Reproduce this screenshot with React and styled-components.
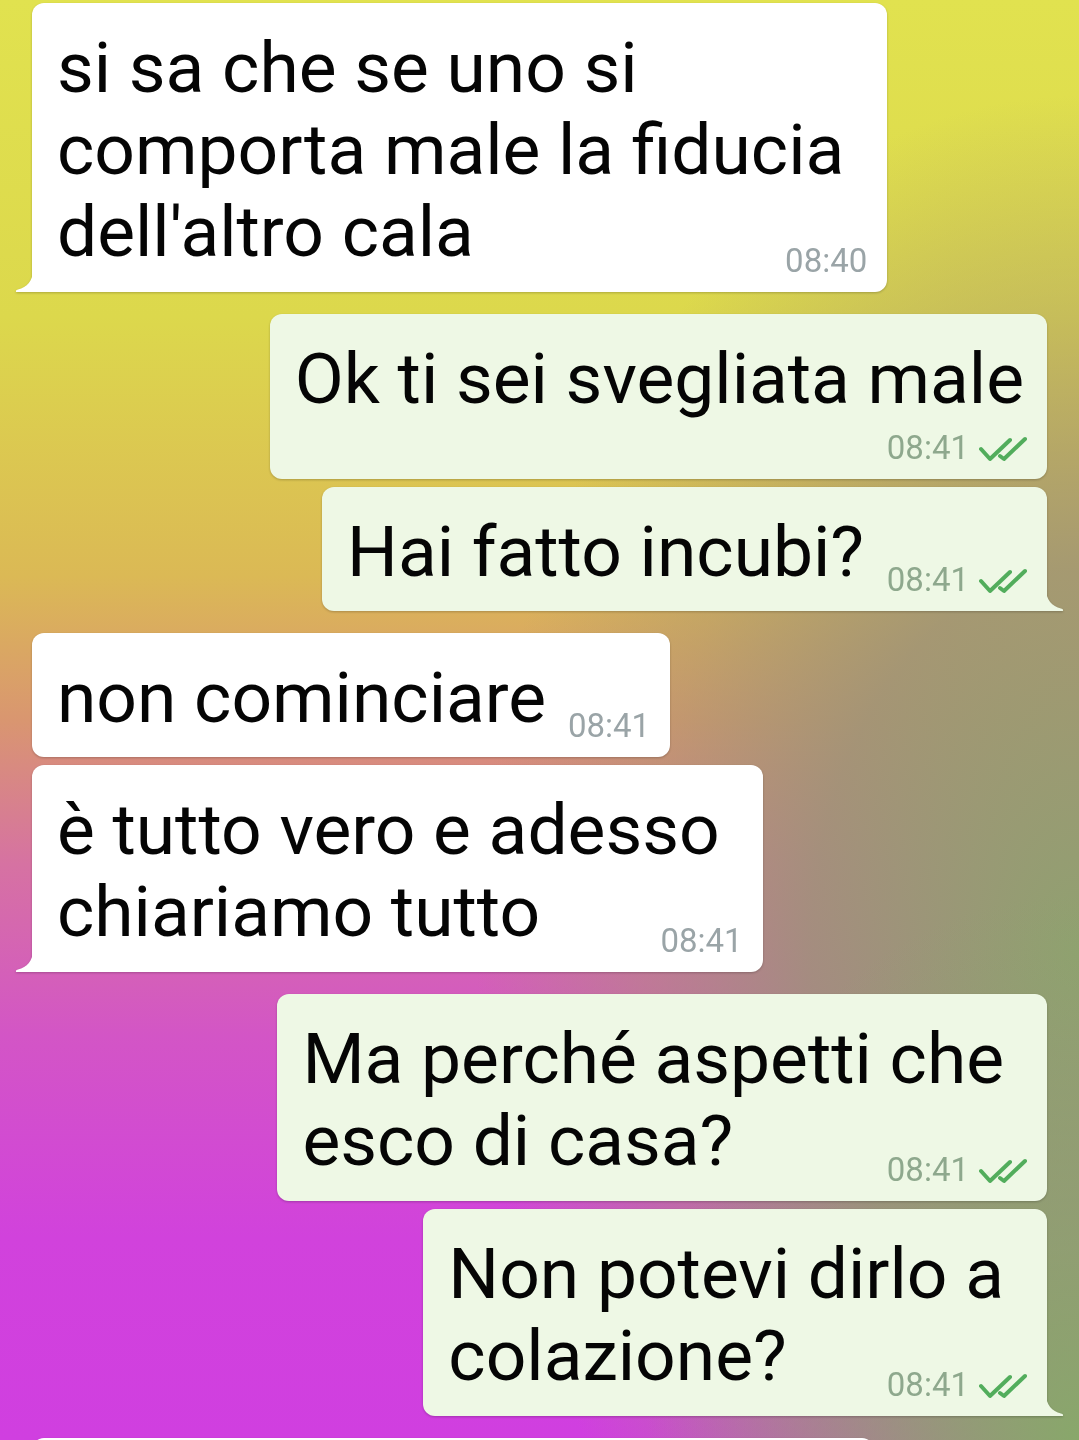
import React from 'react';
import styled, { createGlobalStyle } from 'styled-components';

const GlobalStyle = createGlobalStyle`
  html, body {
    margin: 0;
    padding: 0;
    height: 1440px;
    overflow: hidden;
  }
  body {
    font-family: Roboto, "Noto Sans", "Liberation Sans", sans-serif;
  }
`;

const messages = [
  { id: 1, tail: true, text: ["si sa che se uno si", 'comporta male la fiducia', "dell'altro cala"], time: '08:40', overlap: true },
  { id: 2, out: true, first: true, text: ['Ok ti sei svegliata male'], time: '08:41' },
  { id: 3, out: true, tail: true, text: ['Hai fatto incubi?'], time: '08:41', reserve: true, overlap: true },
  { id: 4, first: true, text: ['non cominciare'], time: '08:41', reserve: true, overlap: true },
  { id: 5, tail: true, text: ['è tutto vero e adesso', 'chiariamo tutto'], time: '08:41', overlap: true },
  { id: 6, out: true, first: true, text: ['Ma perché aspetti che', 'esco di casa?'], time: '08:41', overlap: true },
  { id: 7, out: true, tail: true, text: ['Non potevi dirlo a', 'colazione?'], time: '08:41', overlap: true }
];

const Tail = ({ out }) => (
  <TailShape $out={out} viewBox="0 0 18 22" width="18" height="22">
    <path d="M18 0 C18 11 12 17 3 19.6 Q0 20.6 1.2 22 L18 22 Z" />
  </TailShape>
);

const Checks = () => (
  <svg width="48" height="26" viewBox="0 0 48 26" fill="none" stroke="#52ad5c" strokeWidth="4" strokeLinecap="round" strokeLinejoin="round">
    <path d="M2 13 L11 23 L31 4" />
    <path d="M21 20 L25 23 L46 3" />
  </svg>
);

const Message = ({ m }) => (
  <Bubble $out={m.out} $first={m.first} $tail={m.tail}>
    <Text $reserve={m.reserve} $out={m.out} $multi={m.text.length > 1}>
      {m.text.map((line, i) => (
        <Line key={i}>{line}</Line>
      ))}
    </Text>
    <Meta $out={m.out} $overlap={m.overlap}>
      <span>{m.time}</span>
      {m.out && <Checks />}
    </Meta>
    {m.tail && <Tail out={m.out} />}
  </Bubble>
);

export default function App() {
  return (
    <>
      <GlobalStyle />
      <Chat>
        {messages.map(m => (
          <Message key={m.id} m={m} />
        ))}
        <PeekBubble $first>
          <Text>
            <Line>&nbsp;</Line>
          </Text>
        </PeekBubble>
      </Chat>
    </>
  );
}

const Chat = styled.div`
  height: 1440px;
  box-sizing: border-box;
  padding: 3px 32px 0;
  display: flex;
  flex-direction: column;
  overflow: hidden;
  background:
    radial-gradient(ellipse 40% 38% at 100% 100%, rgba(134, 170, 104, 0.95) 0%, rgba(134, 170, 104, 0.5) 45%, rgba(134, 170, 104, 0) 100%),
    radial-gradient(ellipse 62% 66% at 100% 66%, rgba(140, 164, 108, 0.95) 0%, rgba(156, 148, 118, 0.85) 40%, rgba(168, 152, 110, 0.45) 65%, rgba(170, 150, 110, 0) 90%),
    linear-gradient(180deg, #e1e24f 0%, #dcd84c 22%, #dbb955 40%, #d99670 50%, #d672a2 60%, #d355c6 72%, #d142dc 86%, #d03fe0 100%);
`;

const Bubble = styled.div`
  position: relative;
  align-self: ${p => (p.$out ? 'flex-end' : 'flex-start')};
  width: max-content;
  box-sizing: border-box;
  margin-top: ${p => (p.$first ? '22px' : '8px')};
  &:first-child {
    margin-top: 0;
  }
  padding: 24px 20px 13px 25px;
  display: flex;
  flex-direction: column;
  flex-shrink: 0;
  background: ${p => (p.$out ? '#eef8e5' : '#ffffff')};
  border-radius: 12px;
  ${p => p.$tail && (p.$out ? 'border-bottom-right-radius: 0;' : 'border-bottom-left-radius: 0;')}
  filter: drop-shadow(0 1.5px 1px rgba(0, 0, 0, 0.22));
`;

const PeekBubble = styled(Bubble)`
  width: 842px;
`;

const TailShape = styled.svg`
  position: absolute;
  bottom: 0;
  ${p => (p.$out ? 'right: -17px; transform: scaleX(-1);' : 'left: -17px;')}
  fill: ${p => (p.$out ? '#eef8e5' : '#ffffff')};
`;

const Text = styled.div`
  font-size: 71.3px;
  color: #050505;
  padding-right: ${p => (p.$reserve ? (p.$out ? '163px' : '104px') : p.$multi ? '23px' : '3px')};
  padding-bottom: ${p => (p.$multi ? '1px' : '0')};
`;

const Line = styled.div`
  width: fit-content;
  height: 82px;
  line-height: 82px;
  white-space: nowrap;
`;

const Meta = styled.div`
  align-self: flex-end;
  display: flex;
  align-items: center;
  gap: 10px;
  height: 36px;
  margin-top: ${p => (p.$overlap ? '-31px' : '10px')};
  font-size: 33px;
  line-height: 36px;
  color: ${p => (p.$out ? '#8ea88d' : '#9aa4a7')};
  svg {
    margin-top: 2px;
  }
`;
